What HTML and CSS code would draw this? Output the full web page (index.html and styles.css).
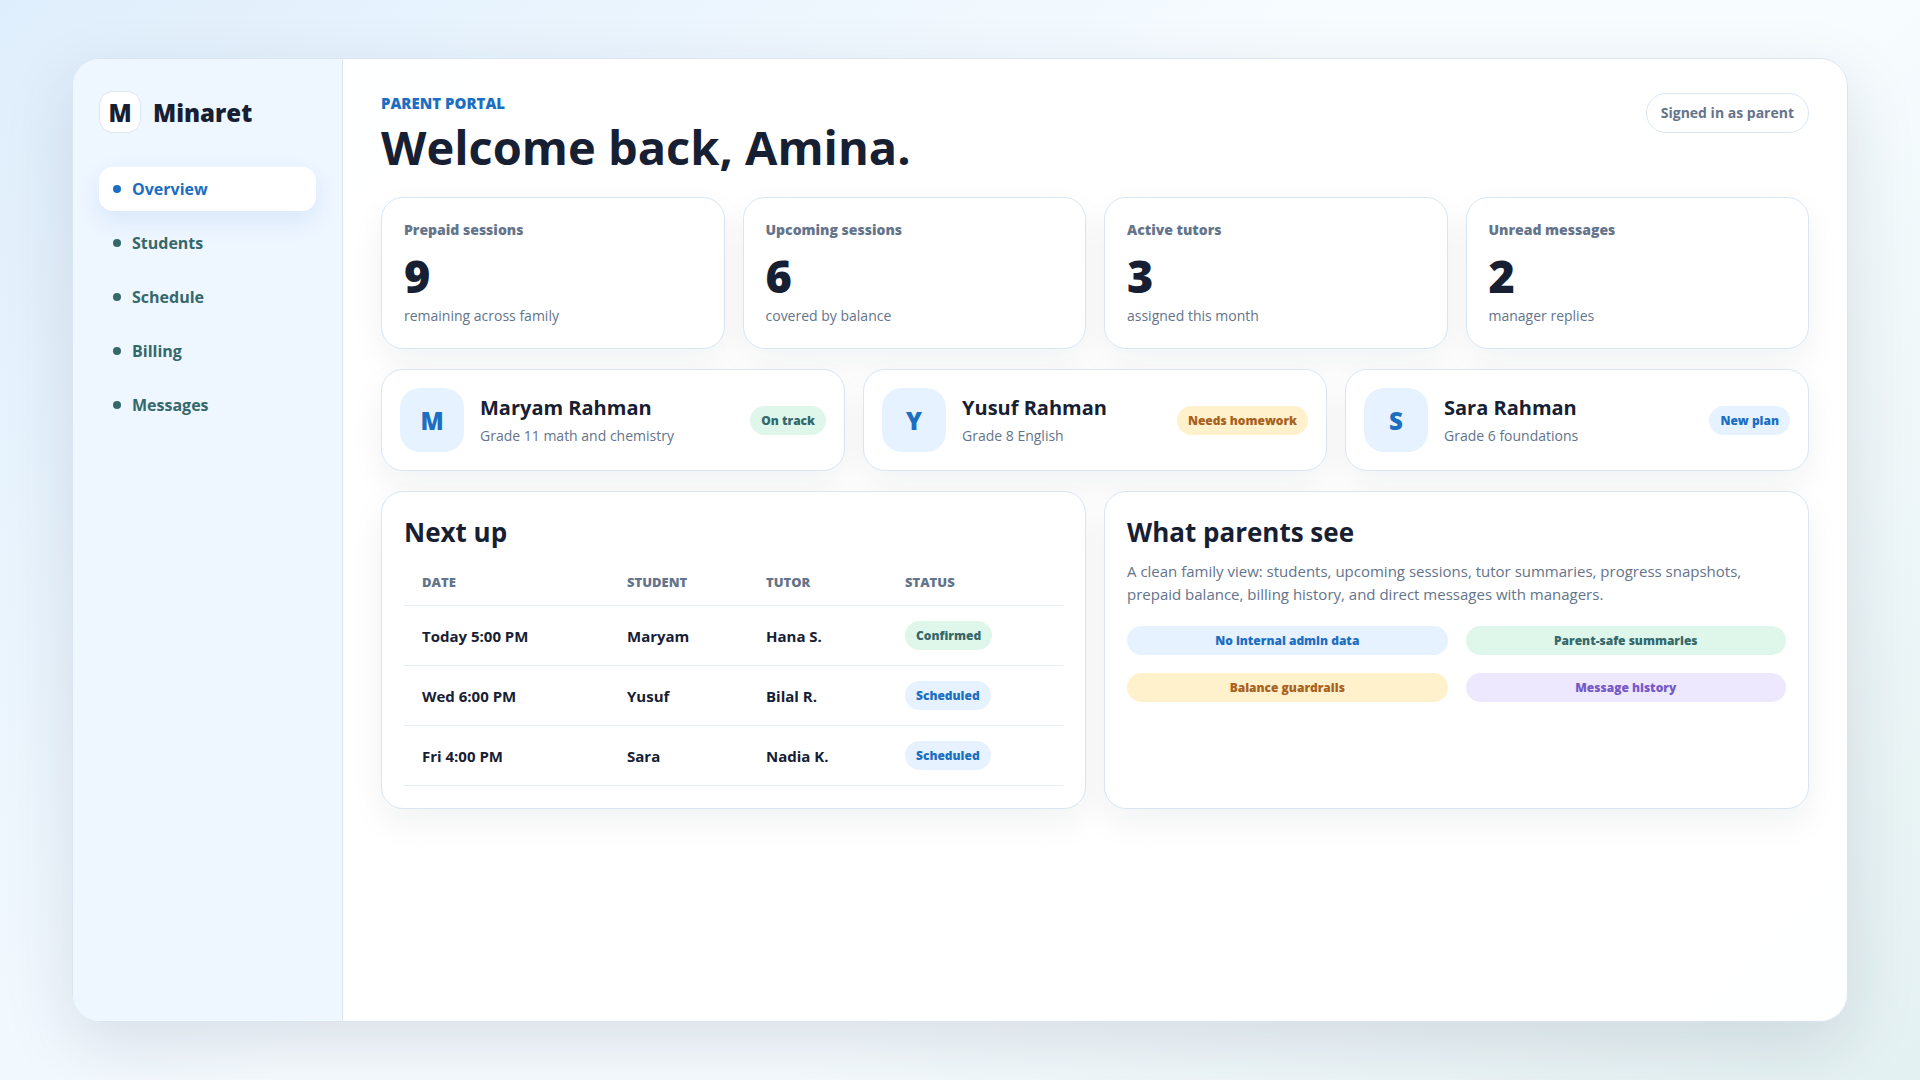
FILE: index.html
```html
<!DOCTYPE html>
<html lang="en">
<head>
    <meta charset="UTF-8">
    <meta name="viewport" content="width=device-width, initial-scale=1.0">
    <title>Minaret - Parent Portal</title>
    <link rel="stylesheet" href="styles.css">
</head>
<body>
    <div class="shell">
        <aside class="sidebar">
            <div class="brand">
                <span class="brand-mark">M</span>
                <span>Minaret</span>
            </div>
            <nav class="nav">
                <a class="active" href="#overview">Overview</a>
                <a href="#students">Students</a>
                <a href="#schedule">Schedule</a>
                <a href="#billing">Billing</a>
                <a href="#messages">Messages</a>
            </nav>
        </aside>

        <main class="main">
            <header class="topbar">
                <div>
                    <p class="eyebrow">Parent portal</p>
                    <h1>Welcome back, Amina.</h1>
                </div>
                <span class="role">Signed in as parent</span>
            </header>

            <section class="stats">
                <article class="card stat">
                    <p class="stat-label">Prepaid sessions</p>
                    <strong>9</strong>
                    <p class="muted">remaining across family</p>
                </article>
                <article class="card stat">
                    <p class="stat-label">Upcoming sessions</p>
                    <strong>6</strong>
                    <p class="muted">covered by balance</p>
                </article>
                <article class="card stat">
                    <p class="stat-label">Active tutors</p>
                    <strong>3</strong>
                    <p class="muted">assigned this month</p>
                </article>
                <article class="card stat">
                    <p class="stat-label">Unread messages</p>
                    <strong>2</strong>
                    <p class="muted">manager replies</p>
                </article>
            </section>

            <section class="students">
                <article class="card student">
                    <div class="avatar">M</div>
                    <div class="student-info">
                        <h3>Maryam Rahman</h3>
                        <p class="muted">Grade 11 math and chemistry</p>
                    </div>
                    <span class="badge green">On track</span>
                </article>
                <article class="card student">
                    <div class="avatar">Y</div>
                    <div class="student-info">
                        <h3>Yusuf Rahman</h3>
                        <p class="muted">Grade 8 English</p>
                    </div>
                    <span class="badge yellow">Needs homework</span>
                </article>
                <article class="card student">
                    <div class="avatar">S</div>
                    <div class="student-info">
                        <h3>Sara Rahman</h3>
                        <p class="muted">Grade 6 foundations</p>
                    </div>
                    <span class="badge blue">New plan</span>
                </article>
            </section>

            <section class="panels">
                <article class="card panel">
                    <h2>Next up</h2>
                    <table>
                        <thead>
                            <tr>
                                <th class="col-date">Date</th>
                                <th class="col-name">Student</th>
                                <th class="col-name">Tutor</th>
                                <th>Status</th>
                            </tr>
                        </thead>
                        <tbody>
                            <tr>
                                <td>Today 5:00 PM</td>
                                <td>Maryam</td>
                                <td>Hana S.</td>
                                <td><span class="badge green">Confirmed</span></td>
                            </tr>
                            <tr>
                                <td>Wed 6:00 PM</td>
                                <td>Yusuf</td>
                                <td>Bilal R.</td>
                                <td><span class="badge blue">Scheduled</span></td>
                            </tr>
                            <tr>
                                <td>Fri 4:00 PM</td>
                                <td>Sara</td>
                                <td>Nadia K.</td>
                                <td><span class="badge blue">Scheduled</span></td>
                            </tr>
                        </tbody>
                    </table>
                </article>
                <article class="card panel">
                    <h2>What parents see</h2>
                    <p class="intro">A clean family view: students, upcoming sessions, tutor summaries, progress snapshots, prepaid balance, billing history, and direct messages with managers.</p>
                    <div class="features">
                        <span class="badge blue">No internal admin data</span>
                        <span class="badge green">Parent-safe summaries</span>
                        <span class="badge yellow">Balance guardrails</span>
                        <span class="badge purple">Message history</span>
                    </div>
                </article>
            </section>
        </main>
    </div>
</body>
</html>
```
FILE: styles.css
```css
:root {
    --ink: #172033;
    --muted: #64748b;
    --line: #d9e6f2;
    --blue: #1b6ec2;
    --blue-soft: #e6f2ff;
    --green: #35686b;
}

* {
    box-sizing: border-box;
}

body {
    margin: 0;
    min-height: 100vh;
    padding: 58px 72px;
    display: flex;
    font-family: "Segoe UI", "Open Sans", "Noto Sans", sans-serif;
    color: var(--ink);
    background: linear-gradient(135deg, #dfeefc 0%, #f7fcff 45%, #f7fcff 62%, #e4f1f2 100%);
}

h1, h2, h3, p {
    margin: 0;
}

.shell {
    flex: 1;
    display: grid;
    grid-template-columns: 270px 1fr;
    border: 1px solid var(--line);
    border-radius: 28px;
    overflow: hidden;
    background: rgba(255, 255, 255, 0.96);
    box-shadow: 0 24px 70px rgba(23, 42, 70, 0.13);
}

/* Sidebar */
.sidebar {
    padding: 32px 26px;
    background: #eef6ff;
    border-right: 1px solid var(--line);
}

.brand {
    display: flex;
    align-items: center;
    gap: 12px;
    margin-bottom: 34px;
    font-size: 24px;
    font-weight: 800;
}

.brand-mark {
    width: 42px;
    height: 42px;
    display: grid;
    place-items: center;
    border: 1px solid var(--line);
    border-radius: 14px;
    background: white;
}

.nav {
    display: grid;
    gap: 10px;
}

.nav a {
    display: flex;
    align-items: center;
    gap: 11px;
    height: 44px;
    padding: 0 14px;
    border-radius: 14px;
    color: var(--green);
    font-size: 16px;
    font-weight: 700;
    text-decoration: none;
}

.nav a::before {
    content: "";
    width: 8px;
    height: 8px;
    border-radius: 50%;
    background: currentColor;
}

.nav a.active {
    color: var(--blue);
    background: white;
    box-shadow: 0 10px 24px rgba(23, 105, 194, 0.1);
}

/* Main column */
.main {
    padding: 34px 38px;
    min-width: 0;
}

.topbar {
    display: flex;
    justify-content: space-between;
    align-items: flex-start;
    margin-bottom: 26px;
}

.eyebrow {
    margin-bottom: 11px;
    color: var(--blue);
    font-size: 15px;
    line-height: 20px;
    font-weight: 800;
    text-transform: uppercase;
}

h1 {
    font-size: 47px;
    line-height: 47px;
    font-weight: 700;
}

.role {
    padding: 9px 14px;
    border: 1px solid var(--line);
    border-radius: 999px;
    background: white;
    color: var(--muted);
    font-size: 14px;
    line-height: 20px;
    font-weight: 700;
}

.card {
    border: 1px solid var(--line);
    border-radius: 22px;
    background: white;
    box-shadow: 0 14px 34px rgba(23, 32, 51, 0.06);
}

.muted {
    color: var(--muted);
    font-size: 14px;
    line-height: 20px;
}

.stats,
.students,
.panels {
    display: grid;
    gap: 18px;
}

.stats {
    grid-template-columns: repeat(4, 1fr);
    margin-bottom: 20px;
}

.stat {
    padding: 22px;
}

.stat-label {
    color: var(--muted);
    font-size: 14px;
    line-height: 20px;
    font-weight: 800;
}

.stat strong {
    display: block;
    margin: 13px 0 8px;
    font-size: 45px;
    line-height: 45px;
    font-weight: 800;
}

.students {
    grid-template-columns: repeat(3, 1fr);
    margin-bottom: 20px;
}

.student {
    display: flex;
    align-items: center;
    gap: 16px;
    padding: 18px;
}

.student-info {
    flex: 1;
}

.student h3 {
    margin-bottom: 4px;
    font-size: 20px;
    line-height: 28px;
}

.avatar {
    width: 64px;
    height: 64px;
    display: grid;
    place-items: center;
    border-radius: 20px;
    background: var(--blue-soft);
    color: var(--blue);
    font-size: 24px;
    font-weight: 800;
}

.badge {
    display: inline-block;
    padding: 5px 11px;
    border-radius: 999px;
    font-size: 12px;
    line-height: 19px;
    font-weight: 800;
    text-align: center;
    white-space: nowrap;
}

.blue {
    background: var(--blue-soft);
    color: var(--blue);
}

.green {
    background: #dff7ea;
    color: var(--green);
}

.yellow {
    background: #fff1cc;
    color: #a8611d;
}

.purple {
    background: #eee8ff;
    color: #7559c7;
}

/* Lower panels */
.panels {
    grid-template-columns: repeat(2, 1fr);
}

.panel {
    padding: 22px;
}

.panel h2 {
    margin-bottom: 10px;
    font-size: 26px;
    line-height: 36px;
}

table {
    width: 100%;
    border-collapse: separate;
    border-spacing: 0;
    table-layout: fixed;
}

th,
td {
    padding: 0 18px;
    border-bottom: 1px solid #e6edf5;
    text-align: left;
}

th {
    height: 46px;
    padding-bottom: 2px;
    color: var(--muted);
    font-size: 13px;
    font-weight: 800;
    text-transform: uppercase;
}

td {
    height: 60px;
    font-size: 15px;
    font-weight: 700;
}

.col-date {
    width: 205px;
}

.col-name {
    width: 139px;
}

.intro {
    margin-bottom: 20px;
    color: var(--muted);
    font-size: 15px;
    line-height: 23px;
}

.features {
    display: grid;
    grid-template-columns: repeat(2, 1fr);
    gap: 18px;
}
```
